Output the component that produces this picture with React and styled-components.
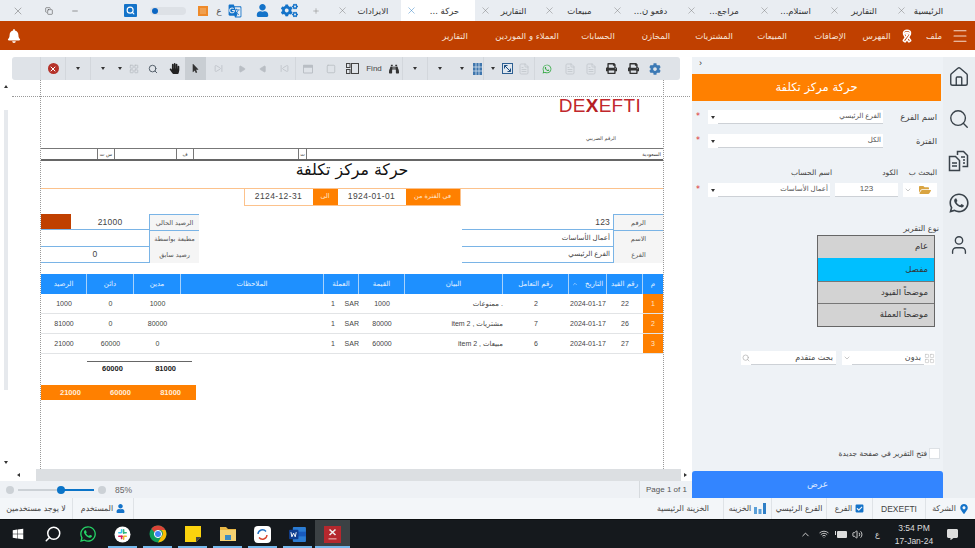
import React from "react";
import styled, { createGlobalStyle } from "styled-components";
import {
  ChevronDown, ChevronUp, Copy, FileText, Home, LayoutGrid, Menu, Minus,
  Play, Plus, Ribbon, Search, SkipBack, SkipForward, Square, User, Volume2, Wifi, X,
} from "lucide-react";
import {
  FaBell, FaBinoculars, FaCheckSquare, FaCog, FaCogs, FaCommentAlt, FaFolderOpen, FaHandPaper, FaMapMarkerAlt,
  FaMousePointer, FaPrint, FaUser, FaWhatsapp, FaWindows, FaRegWindowMaximize,
} from "react-icons/fa";
import { MdGTranslate } from "react-icons/md";

const GlobalStyle = createGlobalStyle`
  html, body { margin: 0; padding: 0; background: #fff; }
  * { box-sizing: border-box; }
  body { font-family: "DejaVu Sans", "Noto Sans", sans-serif; color: #333; overflow: hidden; }
`;

const Page = styled.div`
  width: 975px;
  height: 548px;
  display: flex;
  flex-direction: column;
  overflow: hidden;
`;

/* top tab strip */
const TabStrip = styled.div`
  height: 21px;
  display: flex;
  align-items: stretch;
  background: #e9edf2;
  flex: none;
`;
const WinBtn = styled.div`
  width: ${(p) => p.$w}px;
  margin-left: ${(p) => p.$ml || 0}px;
  display: flex;
  align-items: center;
  justify-content: center;
  color: ${(p) => p.$color || "#666"};
  font-size: 9px;
  flex: none;
`;
const Toggle = styled.div`
  width: 36px;
  height: 8px;
  margin: 7px 0 0 10px;
  border-radius: 4px;
  background: #dde1e6;
  position: relative;
  flex: none;
  &::before {
    content: "";
    position: absolute;
    left: 2px;
    top: 1px;
    width: 6px;
    height: 6px;
    border-radius: 50%;
    background: #0b66c3;
  }
`;
const BlueSquare = styled.div`
  width: 13px;
  height: 13px;
  background: #1473c9;
  border-radius: 1px;
  display: flex;
  align-items: center;
  justify-content: center;
  color: #fff;
`;
const OrangeSquare = styled.div`
  width: 10px;
  height: 10px;
  background: #f0a050;
  border: 2px solid #ee8a2a;
`;
const Tab = styled.div`
  width: ${(p) => p.$w}px;
  display: flex;
  align-items: center;
  background: ${(p) => (p.$active ? "#ffffff" : "transparent")};
  flex: none;
  color: ${(p) => (p.$active ? "#2b7fc4" : "#777")};
`;
const TabClose = styled.div`
  width: 20px;
  display: flex;
  justify-content: center;
  flex: none;
`;
const TabLabel = styled.div`
  flex: 1;
  text-align: center;
  padding-right: ${(p) => p.$pr || 7}px;
  font-size: 8.5px;
  color: #333;
  direction: rtl;
  white-space: nowrap;
`;

/* orange menu */
const MenuBar = styled.div`
  height: 29px;
  flex: none;
  background: #c04000;
  display: flex;
  align-items: center;
  justify-content: space-between;
  padding: 0 6px 0 7px;
  color: #fff;
`;
const MenuItems = styled.div`
  display: flex;
  align-items: center;
`;
const MenuItem = styled.div`
  width: ${(p) => p.$w}px;
  display: flex;
  align-items: center;
  justify-content: center;
  gap: 9px;
  font-size: 8.5px;
  color: #f8e4d8;
  direction: rtl;
  white-space: nowrap;
`;

/* body */
const Body = styled.div`
  height: 448px;
  flex: none;
  display: flex;
`;
const ReportCol = styled.div`
  width: 692px;
  flex: none;
  display: flex;
  flex-direction: column;
  padding-top: 7px;
`;
const Toolbar = styled.div`
  height: 23px;
  width: 668px;
  margin-left: 12px;
  background: #dfe3e8;
  border-radius: 3px;
  display: flex;
  align-items: center;
  padding-left: 28px;
  flex: none;
`;
const Tool = styled.div`
  width: ${(p) => p.$w || 21}px;
  height: 100%;
  display: flex;
  align-items: center;
  justify-content: center;
  flex: none;
  background: ${(p) => (p.$on ? "#c9ced3" : "transparent")};
  border-left: ${(p) => (p.$sep ? "1px solid #d3d7dc" : "0")};
  color: ${(p) => p.$color || "#b9bec4"};
  font-size: 8px;
  font-family: "Liberation Sans", sans-serif;
`;
const Caret = styled.span`
  width: 0;
  height: 0;
  border-left: 2.5px solid transparent;
  border-right: 2.5px solid transparent;
  border-top: 3px solid #333;
`;
const StopDot = styled.div`
  width: 11px;
  height: 11px;
  border-radius: 50%;
  background: #b5322a;
  color: #fff;
  display: flex;
  align-items: center;
  justify-content: center;
`;
const Viewer = styled.div`
  height: 389px;
  flex: none;
  display: flex;
  position: relative;
`;
const VScroll = styled.div`
  width: 40px;
  flex: none;
  position: relative;
`;
const VTrack = styled.div`
  position: absolute;
  left: 4px;
  top: 30px;
  width: 4px;
  height: 280px;
  background: #e6e9ed;
`;
const Arrow = styled.span`
  position: absolute;
  width: 0;
  height: 0;
  left: ${(p) => p.$x}px;
  top: ${(p) => p.$y}px;
  border-left: 2.5px solid transparent;
  border-right: 2.5px solid transparent;
  ${(p) => (p.$down ? "border-top: 3px solid #333;" : "border-bottom: 3px solid #333;")}
`;
const SideArrow = styled.span`
  width: 0;
  height: 0;
  border-top: 2.5px solid transparent;
  border-bottom: 2.5px solid transparent;
  ${(p) => (p.$right ? "border-left: 3px solid #333;" : "border-right: 3px solid #333;")}
`;
const GuideLine = styled.div`
  position: absolute;
  left: 12px;
  right: 2px;
  top: 16px;
  border-top: 1px dotted #999;
`;
const Sheet = styled.div`
  width: 624px;
  flex: none;
  border-left: 1px dotted #999;
  border-right: 1px dotted #999;
  display: flex;
  flex-direction: column;
  padding-top: 19px;
  font-family: "Liberation Sans", "DejaVu Sans", sans-serif;
`;
const Logo = styled.div`
  height: 14px;
  align-self: flex-end;
  margin-right: 22px;
  font-family: "Liberation Sans", sans-serif;
  font-size: 19px;
  line-height: 14px;
  color: #c1272d;
  letter-spacing: 0.3px;
`;
const LogoMark = styled.span`
  font-weight: 700;
  color: #b51f25;
`;
const TaxNo = styled.div`
  margin: 21px 0 0 0;
  height: 8px;
  padding-right: 47px;
  text-align: right;
  direction: rtl;
  font-size: 5px;
  line-height: 8px;
  color: #444;
  font-family: "DejaVu Sans", sans-serif;
`;
const IdTable = styled.div`
  margin-top: 6px;
  height: 13px;
  border-top: 1px solid #777;
  border-bottom: 2px solid #666;
  display: grid;
  grid-template-columns: 56px 18px 61px 18px 104px 9px 1fr;
  font-family: "DejaVu Sans", sans-serif;
  font-size: 5px;
  line-height: 10px;
  color: #333;
`;
const IdCell = styled.div`
  text-align: ${(p) => (p.$right ? "right" : "center")};
  padding-right: ${(p) => (p.$right ? "2px" : "0")};
  border-left: ${(p) => (p.$ruled ? "1px solid #777" : "0")};
  border-right: ${(p) => (p.$ruled ? "1px solid #777" : "0")};
  direction: rtl;
`;
const Title = styled.div`
  height: 27px;
  text-align: center;
  direction: rtl;
  font-family: "DejaVu Sans", sans-serif;
  font-size: 15.8px;
  line-height: 17px;
  color: #111;
`;
const DateBand = styled.div`
  border-top: 1px solid #fcc28c;
  display: flex;
  justify-content: center;
`;
const DateBox = styled.div`
  height: 17px;
  display: flex;
  border: 1px solid #fcc28c;
  border-top: 0;
`;
const DateCell = styled.div`
  width: ${(p) => p.$w}px;
  background: ${(p) => (p.$fill ? "#ff8000" : "#fff")};
  color: ${(p) => (p.$fill ? "#ffe6cc" : "#444")};
  font-family: ${(p) => (p.$fill ? '"DejaVu Sans", sans-serif' : '"Liberation Sans", sans-serif')};
  font-size: ${(p) => (p.$fill ? "6.5px" : "8.5px")};
  text-align: center;
  line-height: 15px;
  direction: rtl;
  letter-spacing: ${(p) => (p.$fill ? "0" : "0.4px")};
`;
const InfoBlocks = styled.div`
  margin-top: 8px;
  height: 49px;
  display: flex;
  justify-content: space-between;
`;
const Info = styled.div`
  width: ${(p) => p.$w}px;
  display: flex;
  flex-direction: column;
`;
const InfoRow = styled.div`
  flex: 1;
  display: flex;
`;
const InfoValue = styled.div`
  flex: 1;
  display: flex;
  align-items: center;
  justify-content: ${(p) => (p.$right ? "flex-start" : "center")};
  border-bottom: 1px solid #7ab4e6;
  padding-right: ${(p) => (p.$right ? "3px" : "0")};
  font-size: ${(p) => (p.$small ? "7px" : "8.5px")};
  color: #444;
  direction: ${(p) => (p.$right ? "rtl" : "ltr")};
  letter-spacing: 0.2px;
  white-space: nowrap;
  font-family: "Liberation Sans", "DejaVu Sans", sans-serif;
`;
const InfoSwatch = styled.div`
  width: 30px;
  height: 100%;
  background: #c04000;
  flex: none;
`;
const InfoNumber = styled.span`
  flex: 1;
  text-align: center;
`;
const InfoLabel = styled.div`
  width: 50px;
  flex: none;
  background: #f5f5f5;
  border-left: 1px solid #7ab4e6;
  border-top: ${(p) => (p.$noTop ? "0" : "1px solid #7ab4e6")};
  display: flex;
  align-items: center;
  justify-content: center;
  direction: rtl;
  font-family: "DejaVu Sans", sans-serif;
  font-size: 6.5px;
  color: #555;
  white-space: nowrap;
`;
const GRID = "46px 47px 47px 143px 35px 46px 98px 66px 38px 36px 1fr";
const TableHead = styled.div`
  margin-top: 11px;
  height: 20px;
  display: grid;
  grid-template-columns: ${GRID};
  background: #1e90ff;
`;
const HeadCell = styled.div`
  border-right: 1px solid #a8d2fb;
  &:last-child { border-right: 0; }
  display: flex;
  align-items: center;
  justify-content: center;
  gap: 7px;
  color: #e6f3ff;
  direction: rtl;
  font-family: "DejaVu Sans", sans-serif;
  font-size: 7px;
  white-space: nowrap;
`;
const TableRow = styled.div`
  height: 20px;
  display: grid;
  grid-template-columns: ${GRID};
  border-bottom: 1px solid #e2e4e6;
`;
const Cell = styled.div`
  display: flex;
  align-items: center;
  justify-content: ${(p) => (p.$right ? "flex-start" : p.$between ? "space-between" : "center")};
  padding: ${(p) => (p.$between ? "0 0 0 7px" : 0)};
  font-size: 7px;
  color: #444;
  direction: ${(p) => (p.$right ? "rtl" : "ltr")};
  font-family: "Liberation Sans", "DejaVu Sans", sans-serif;
  white-space: nowrap;
`;
const NumCell = styled(Cell)`
  background: #ff8000;
  color: #ffe6cc;
`;
const Totals = styled.div`
  width: 105px;
  margin: 7px 0 0 46px;
  border-top: 1px solid #666;
  height: 15px;
  display: flex;
  padding: 2px 16px 0 15px;
  justify-content: space-between;
  font-size: 7.5px;
  font-weight: 700;
  color: #222;
`;
const TotalBar = styled.div`
  width: 155px;
  height: 15px;
  margin-top: 9px;
  background: #ff8000;
  display: flex;
  align-items: center;
  justify-content: space-between;
  padding: 0 15px 0 19px;
  font-size: 7.5px;
  font-weight: 700;
  color: #ffeedd;
`;
const HScrollRow = styled.div`
  height: 12px;
  flex: none;
  display: flex;
  align-items: center;
`;
const HArrowBox = styled.div`
  width: ${(p) => p.$w}px;
  display: flex;
  justify-content: center;
  flex: none;
`;
const HTrack = styled.div`
  width: 645px;
  height: 12px;
  background: #dcdfe2;
  flex: none;
`;
const ZoomBar = styled.div`
  flex: 1;
  display: flex;
  align-items: center;
  background: #eef1f5;
  padding-left: 6px;
`;
const ZoomDot = styled.div`
  width: 8px;
  height: 8px;
  border-radius: 50%;
  background: #ccd1d6;
  flex: none;
`;
const ZoomTrack = styled.div`
  width: 76px;
  height: 2px;
  margin: 0 4px;
  background: linear-gradient(to right, #ccd1d6 0 57%, #0b74c8 57% 100%);
  position: relative;
  flex: none;
  &::after {
    content: "";
    position: absolute;
    left: 39px;
    top: -3px;
    width: 8px;
    height: 8px;
    border-radius: 50%;
    background: #0b74c8;
  }
`;
const ZoomText = styled.div`
  margin-left: 9px;
  font-family: "Liberation Sans", sans-serif;
  font-size: 8.5px;
  color: #666;
`;
const PageCount = styled.div`
  margin-left: auto;
  width: 53px;
  height: 100%;
  border-left: 1px solid #d6dade;
  font-family: "Liberation Sans", sans-serif;
  font-size: 8px;
  color: #555;
  line-height: 17px;
  padding-left: 6px;
  white-space: nowrap;
`;

/* right form panel */
const Panel = styled.div`
  width: 251px;
  flex: none;
  margin-top: 7px;
  background: #eef2f6;
  display: flex;
  flex-direction: column;
  direction: ltr;
`;
const Collapse = styled.div`
  height: 17px;
  padding: 1px 0 0 7px;
  font-size: 9px;
  color: #333;
  font-family: "Liberation Sans", sans-serif;
`;
const PanelTitle = styled.div`
  height: 27px;
  margin-right: 2px;
  background: #ff8000;
  color: #fff;
  text-align: center;
  direction: rtl;
  font-size: 11.5px;
  line-height: 27px;
`;
const FormRow = styled.div`
  height: 14px;
  margin-top: ${(p) => p.$top}px;
  display: flex;
  align-items: center;
  padding-left: 4px;
`;
const Star = styled.div`
  width: 12px;
  flex: none;
  color: #d33;
  font-size: 8px;
  line-height: 14px;
`;
const Field = styled.div`
  width: ${(p) => p.$w || 175}px;
  height: 14px;
  flex: none;
  background: #fff;
  display: flex;
  align-items: center;
  margin-right: ${(p) => p.$mr || 0}px;
`;
const FieldCaret = styled.div`
  width: 10px;
  flex: none;
  display: flex;
  justify-content: center;
`;
const FolderSlot = styled.div`
  flex: 1;
  display: flex;
  justify-content: center;
  color: #d9a441;
`;
const FieldText = styled.div`
  flex: 1;
  height: 14px;
  border-bottom: 1px solid #cdd1d6;
  direction: rtl;
  text-align: ${(p) => (p.$center ? "center" : "right")};
  padding: 0 2px;
  font-size: ${(p) => (p.$center ? "8px" : "7px")};
  line-height: 12px;
  color: #555;
  white-space: nowrap;
  font-family: "Liberation Sans", "DejaVu Sans", sans-serif;
`;
const FormLabel = styled.div`
  flex: 1;
  padding-right: 6px;
  text-align: right;
  direction: rtl;
  font-size: 8.5px;
  color: #444;
  white-space: nowrap;
`;
const ColLabels = styled.div`
  height: 10px;
  margin: 20px 6px 5px 0;
  display: flex;
  justify-content: flex-end;
  font-size: 7.5px;
  color: #444;
`;
const ColLabel = styled.div`
  width: ${(p) => p.$w}px;
  flex: none;
  text-align: right;
  direction: rtl;
  white-space: nowrap;
`;
const TypeLabel = styled.div`
  margin: 26px 4px 1px 0;
  height: 11px;
  direction: rtl;
  font-size: 8px;
  line-height: 11px;
  color: #444;
`;
const TypeList = styled.div`
  width: 118px;
  height: 92px;
  margin-left: 125px;
  border: 1px solid #666;
  display: flex;
  flex-direction: column;
`;
const TypeItem = styled.div`
  flex: 1;
  background: ${(p) => (p.$on ? "#00bfff" : "#d3d3d3")};
  border-top: 1px solid ${(p) => (p.$on ? "#00bfff" : "#777")};
  &:first-child { border-top: 0; }
  direction: rtl;
  padding-right: 6px;
  font-size: 8.5px;
  line-height: 21px;
  color: #333;
`;
const SearchRow = styled.div`
  height: 14px;
  margin: 24px 0 0 49px;
  display: flex;
  gap: 6px;
`;
const SearchField = styled.div`
  width: ${(p) => p.$w}px;
  height: 14px;
  background: #fff;
  display: flex;
  align-items: center;
  color: #aaa;
  flex: none;
`;
const SearchText = styled.div`
  flex: 1;
  height: 14px;
  border-bottom: 1px solid #cdd1d6;
  direction: rtl;
  font-size: 8px;
  line-height: 13px;
  padding-right: 3px;
  color: #444;
`;
const NewPageRow = styled.div`
  margin-top: auto;
  height: 11px;
  display: flex;
  justify-content: flex-end;
  align-items: center;
  gap: 2px;
  padding-right: 3px;
  font-size: 7.5px;
  color: #444;
`;
const NewPageText = styled.span`
  direction: rtl;
`;
const CheckBox = styled.div`
  width: 11px;
  height: 11px;
  background: #fff;
  border: 1px solid #dde1e5;
`;
const ShowButton = styled.div`
  margin-top: 12px;
  height: 27px;
  background: #3385ff;
  border-radius: 3px 3px 0 0;
  color: #dbe9ff;
  text-align: center;
  font-size: 9px;
  line-height: 26px;
  direction: rtl;
`;
const Rail = styled.div`
  flex: 1;
  background: #eaeef2;
  margin-top: 7px;
  display: flex;
  flex-direction: column;
  align-items: center;
  padding-top: 9px;
  gap: 20px;
  color: #39424a;
`;

/* status strip */
const StatusBar = styled.div`
  height: 21px;
  flex: none;
  background: #f3f6f9;
  display: flex;
  justify-content: space-between;
`;
const StatusGroup = styled.div`
  display: flex;
`;
const StatusItem = styled.div`
  width: ${(p) => p.$w}px;
  display: flex;
  align-items: center;
  justify-content: center;
  gap: 3px;
  border-left: ${(p) => (p.$sep ? "1px solid #dfe3e7" : "0")};
  font-size: 7.8px;
  color: #444;
  direction: rtl;
  white-space: nowrap;
  font-family: "DejaVu Sans", sans-serif;
`;
const CompanyName = styled(StatusItem)`
  direction: ltr;
  font-family: "Liberation Sans", sans-serif;
  font-size: 8.5px;
`;

/* windows taskbar */
const Taskbar = styled.div`
  flex: 1;
  background: #15191d;
  display: flex;
  align-items: stretch;
  justify-content: space-between;
  border-top: 1px solid #0c0f11;
`;
const TaskGroup = styled.div`
  display: flex;
`;
const TaskBtn = styled.div`
  width: 35px;
  display: flex;
  align-items: center;
  justify-content: center;
  position: relative;
  color: ${(p) => p.$color || "#fff"};
  background: ${(p) => (p.$active ? "#3c4144" : "transparent")};
  ${(p) =>
    p.$open &&
    `&::after {
      content: "";
      position: absolute;
      left: ${p.$active ? 0 : 3}px;
      right: ${p.$active ? 0 : 3}px;
      bottom: 0;
      height: 2px;
      background: #76b9ed;
    }`}
`;
const Tray = styled.div`
  display: flex;
  align-items: center;
  color: #ddd;
  padding-right: 14px;
  font-family: "Liberation Sans", sans-serif;
`;
const TraySlot = styled.div`
  width: 17px;
  margin-left: ${(p) => p.$ml || 0}px;
  display: flex;
  justify-content: center;
  font-size: 8px;
`;
const Clock = styled.div`
  width: 56px;
  text-align: center;
  font-size: 8.5px;
  line-height: 13px;
  padding-top: 1px;
`;

const tabs = [
  { w: 69, t: "الايرادات" },
  { w: 74, t: "حركة ...", active: true },
  { w: 64, t: "التقارير" },
  { w: 68, t: "مبيعات" },
  { w: 74, t: "دفعو ن..." },
  { w: 73, t: "مراجع..." },
  { w: 70, t: "استلام..." },
  { w: 67, t: "التقارير" },
  { w: 84, t: "الرئيسية", pr: 29 },
];

const menu = [
  { w: 60, t: "التقارير" },
  { w: 84, t: "العملاء و الموردين" },
  { w: 58, t: "الحسابات" },
  { w: 58, t: "المخازن" },
  { w: 58, t: "المشتريات" },
  { w: 58, t: "المبيعات" },
  { w: 58, t: "الإضافات" },
];

const rows = [
  ["1000", "0", "1000", "1000", "2", "22", ". ممنوعات", "1"],
  ["81000", "0", "80000", "80000", "7", "26", "مشتريات , item 2", "2"],
  ["21000", "60000", "0", "60000", "6", "27", "مبيعات , item 2", "3"],
];

const Doc = ({ c = "#bfc4c9" }) => <FileText size={12} color={c} strokeWidth={1.5} />;

const PanelsIcon = () => (
  <svg width="13" height="11" viewBox="0 0 13 11" fill="none" stroke="#444">
    <rect x=".5" y=".5" width="3.5" height="4" />
    <rect x=".5" y="6.5" width="3.5" height="4" />
    <rect x="5.5" y=".5" width="7" height="10" />
  </svg>
);

const ColumnsIcon = () => (
  <svg width="9" height="12" viewBox="0 0 9 12">
    <rect width="9" height="12" fill="#3f76ad" />
    <path d="M3 0v12M6 0v12M0 4h9M0 8h9" stroke="#d6e3ef" strokeWidth=".8" />
  </svg>
);

const ResizeIcon = () => (
  <svg width="11" height="11" viewBox="0 0 11 11">
    <rect x=".5" y=".5" width="10" height="10" fill="#dfe7ef" stroke="#2d5f92" />
    <path d="M2.5 2.5l6 6M2.5 2.5v3M2.5 2.5h3M8.5 8.5v-3M8.5 8.5h-3" stroke="#1c4d80" fill="none" />
  </svg>
);

const DocsIcon = () => (
  <svg width="22" height="22" viewBox="0 0 22 22" fill="none" stroke="#39424a" strokeWidth="1.5">
    <path d="M1.5 6.5h6l4 4v10h-10z" />
    <path d="M9.5 5V1.5h6l4 4v11h-5" />
    <path d="M4 13h5M4 16h5M13 7h4M15 10h2M15 13h2" />
  </svg>
);

const BarsIcon = () => (
  <svg width="12" height="11" viewBox="0 0 12 11">
    <rect x="0" y="4" width="3" height="7" fill="#5a9fd8" />
    <rect x="4.5" y="6" width="3" height="5" fill="#5a9fd8" />
    <rect x="9" y="0" width="3" height="11" fill="#2f7fc6" />
  </svg>
);

const BatteryIcon = () => (
  <svg width="12" height="9" viewBox="0 0 12 9">
    <rect x="2" y="1" width="10" height="7" rx="1" fill="#ddd" />
    <rect x="0" y="1" width="1" height="4" fill="#ddd" />
  </svg>
);

const TaskIcon = ({ kind }) => {
  if (kind === "slack")
    return (
      <svg width="17" height="17" viewBox="0 0 17 17">
        <circle cx="8.5" cy="8.5" r="8" fill="#fff" />
        <rect x="4" y="6" width="4" height="1.6" rx=".8" fill="#36c5f0" />
        <rect x="6.8" y="3" width="1.6" height="4" rx=".8" fill="#36c5f0" />
        <rect x="9" y="9.4" width="4" height="1.6" rx=".8" fill="#ecb22e" />
        <rect x="8.8" y="10" width="1.6" height="4" rx=".8" fill="#ecb22e" />
        <rect x="8.8" y="3" width="1.6" height="5" rx=".8" fill="#2eb67d" />
        <rect x="9" y="6" width="4" height="1.6" rx=".8" fill="#2eb67d" />
        <rect x="4" y="9.4" width="5" height="1.6" rx=".8" fill="#e01e5a" />
        <rect x="6.8" y="9.4" width="1.6" height="4" rx=".8" fill="#e01e5a" />
      </svg>
    );
  if (kind === "chrome")
    return (
      <svg width="18" height="18" viewBox="0 0 18 18">
        <circle cx="9" cy="9" r="8.5" fill="#0f9d58" />
        <path d="M9 .5A8.5 8.5 0 0 1 16.4 5H9a4 4 0 0 0-3.6 2.3L2.4 3.7A8.5 8.5 0 0 1 9 .5z" fill="#db4437" />
        <path d="M16.4 5A8.5 8.5 0 0 1 9 17.5l3.4-6A4 4 0 0 0 12 5z" fill="#fbbc05" />
        <circle cx="9" cy="9" r="3.6" fill="#4285f4" stroke="#fff" strokeWidth="1" />
      </svg>
    );
  if (kind === "sticky")
    return (
      <svg width="16" height="16" viewBox="0 0 16 16">
        <path d="M0 0h16v11l-5 5H0z" fill="#fbd30e" />
        <path d="M11 16v-5h5z" fill="#444" />
      </svg>
    );
  if (kind === "folder")
    return (
      <svg width="16" height="14" viewBox="0 0 16 14">
        <path d="M0 0h6l2 2h8v12H0z" fill="#e9b846" />
        <rect x="0" y="3" width="16" height="11" fill="#f5d272" />
        <rect x="5" y="8" width="6" height="5" fill="#3c8bc4" />
      </svg>
    );
  if (kind === "sync")
    return (
      <svg width="17" height="17" viewBox="0 0 17 17">
        <rect width="17" height="17" rx="4" fill="#fff" />
        <path d="M4 8a4.5 4.5 0 0 1 8-2.5" fill="none" stroke="#1f6fc0" strokeWidth="1.4" />
        <path d="M13 9a4.5 4.5 0 0 1-8 2.5" fill="none" stroke="#d8452f" strokeWidth="1.4" />
      </svg>
    );
  if (kind === "word")
    return (
      <svg width="17" height="15" viewBox="0 0 18 16">
        <rect x="4" y="0" width="14" height="16" rx="1" fill="#2b7cd3" />
        <rect x="4" y="5" width="14" height="5" fill="#185abd" />
        <rect x="0" y="3" width="10" height="10" rx="1" fill="#103f91" />
        <path d="M2 5.5l1 5 1.8-4 1.8 4 1-5" fill="none" stroke="#fff" strokeWidth="1" />
      </svg>
    );
  return (
    <svg width="17" height="17" viewBox="0 0 17 17">
      <rect width="17" height="17" fill="#b5282e" />
      <path d="M5.5 3.5l6 5.5M11.5 3.5l-6 5.5" stroke="#eee" strokeWidth="1.6" />
      <rect x="4.5" y="12" width="8" height="1.6" fill="#d88" />
    </svg>
  );
};

const App = () => {
  return (
    <Page>
      <GlobalStyle />
      <TabStrip>
        <WinBtn $w={36}><X size={12} strokeWidth={1} /></WinBtn>
        <WinBtn $w={26}><Copy size={8} strokeWidth={1.6} color="#444" /></WinBtn>
        <WinBtn $w={26}><Minus size={8} strokeWidth={1.6} color="#444" /></WinBtn>
        <WinBtn $w={20} $ml={32}><BlueSquare><Search size={9} strokeWidth={3} /></BlueSquare></WinBtn>
        <Toggle />
        <WinBtn $w={18} $ml={8}><OrangeSquare /></WinBtn>
        <WinBtn $w={14} $color="#555">ع</WinBtn>
        <WinBtn $w={18} $color="#1473c9"><MdGTranslate size={14} /></WinBtn>
        <WinBtn $w={18} $ml={9} $color="#1473c9"><FaUser size={13} /></WinBtn>
        <WinBtn $w={18} $ml={9} $color="#1473c9"><FaCogs size={17} /></WinBtn>
        <WinBtn $w={18} $ml={9}><Plus size={8} color="#999" /></WinBtn>
        <WinBtn $w={7} />
        {tabs.map((tab) => (
          <Tab key={tab.t + tab.w} $w={tab.w} $active={tab.active}>
            <TabClose><X size={11} strokeWidth={1} /></TabClose>
            <TabLabel $pr={tab.pr}>{tab.t}</TabLabel>
          </Tab>
        ))}
      </TabStrip>

      <MenuBar>
        <FaBell size={14} color="#fff" />
        <MenuItems>
          {menu.map((m) => (
            <MenuItem key={m.t} $w={m.w}>{m.t}</MenuItem>
          ))}
          <MenuItem $w={58}>
            <Ribbon size={14} color="#fff" strokeWidth={2.6} />
            <span>الفهرس</span>
          </MenuItem>
          <MenuItem $w={34}>ملف</MenuItem>
          <MenuItem $w={18}><Menu size={18} color="#f3dcd0" strokeWidth={1.4} /></MenuItem>
        </MenuItems>
      </MenuBar>

      <Body>
        <ReportCol>
          <Toolbar>
            <Tool $w={25} $sep $color="#fff"><StopDot><X size={8} strokeWidth={3} /></StopDot></Tool>
            <Tool $w={25} $sep><Caret /></Tool>
            <Tool $w={24} $sep><Caret /></Tool>
            <Tool $w={12}><Caret /></Tool>
            <Tool $w={16}><LayoutGrid size={10} /></Tool>
            <Tool $w={21} $color="#55606b"><Search size={10} strokeWidth={2.4} /></Tool>
            <Tool $w={22} $color="#222"><FaHandPaper size={11} /></Tool>
            <Tool $on $color="#333"><FaMousePointer size={9} /></Tool>
            <Tool $w={25}><SkipForward size={9} /></Tool>
            <Tool $w={22}><Play size={8} fill="#b9bec4" /></Tool>
            <Tool $w={20}><Play size={8} fill="#b9bec4" style={{ transform: "scaleX(-1)" }} /></Tool>
            <Tool $w={22}><SkipBack size={9} /></Tool>
            <Tool $w={25} $sep><FaRegWindowMaximize size={10} /></Tool>
            <Tool $w={21}><Square size={10} /></Tool>
            <Tool $w={22}><PanelsIcon /></Tool>
            <Tool $w={22} $color="#444">Find</Tool>
            <Tool $w={17} $color="#333"><FaBinoculars size={10} /></Tool>
            <Tool $w={25} $sep><Caret /></Tool>
            <Tool $w={25} $sep><Caret /></Tool>
            <Tool $w={19}><Caret /></Tool>
            <Tool $w={12}><ColumnsIcon /></Tool>
            <Tool $w={19} $sep><Caret /></Tool>
            <Tool $w={11}><ResizeIcon /></Tool>
            <Tool $w={21}><Doc /></Tool>
            <Tool $w={25} $sep $color="#2ca63c"><FaWhatsapp size={10} /></Tool>
            <Tool $w={21}><Doc /></Tool>
            <Tool $w={21}><Doc /></Tool>
            <Tool $w={21} $color="#333"><FaPrint size={11} /></Tool>
            <Tool $w={22} $color="#333"><FaPrint size={11} /></Tool>
            <Tool $w={22} $color="#3d7ab5"><FaCog size={12} /></Tool>
          </Toolbar>
          <Viewer>
            <GuideLine />
            <VScroll>
              <Arrow $x={4} $y={5} />
              <VTrack />
              <Arrow $x={4} $y={381} $down />
            </VScroll>
            <Sheet>
              <Logo>DE<LogoMark>X</LogoMark>EFTI</Logo>
              <TaxNo>الرقم الضريبي</TaxNo>
              <IdTable>
                <IdCell />
                <IdCell $ruled>س ت</IdCell>
                <IdCell />
                <IdCell $ruled>ف</IdCell>
                <IdCell />
                <IdCell $ruled>ت</IdCell>
                <IdCell $right>السعودية</IdCell>
              </IdTable>
              <Title>حركة مركز تكلفة</Title>
              <DateBand>
                <DateBox>
                  <DateCell $w={68}>2124-12-31</DateCell>
                  <DateCell $w={25} $fill>الى</DateCell>
                  <DateCell $w={68}>1924-01-01</DateCell>
                  <DateCell $w={54} $fill>في الفترة من</DateCell>
                </DateBox>
              </DateBand>
              <InfoBlocks>
                <Info $w={158}>
                  <InfoRow>
                    <InfoValue><InfoSwatch /><InfoNumber>21000</InfoNumber></InfoValue>
                    <InfoLabel>الرصيد الحالي</InfoLabel>
                  </InfoRow>
                  <InfoRow>
                    <InfoValue />
                    <InfoLabel>مطبعة بواسطة</InfoLabel>
                  </InfoRow>
                  <InfoRow>
                    <InfoValue>0</InfoValue>
                    <InfoLabel $noTop>رصيد سابق</InfoLabel>
                  </InfoRow>
                </Info>
                <Info $w={201}>
                  <InfoRow>
                    <InfoValue $right>123</InfoValue>
                    <InfoLabel>الرقم</InfoLabel>
                  </InfoRow>
                  <InfoRow>
                    <InfoValue $right $small>أعمال الأساسات</InfoValue>
                    <InfoLabel>الاسم</InfoLabel>
                  </InfoRow>
                  <InfoRow>
                    <InfoValue $right $small>الفرع الرئيسي</InfoValue>
                    <InfoLabel $noTop>الفرع</InfoLabel>
                  </InfoRow>
                </Info>
              </InfoBlocks>
              <TableHead>
                <HeadCell>الرصيد</HeadCell>
                <HeadCell>دائن</HeadCell>
                <HeadCell>مدين</HeadCell>
                <HeadCell>الملاحظات</HeadCell>
                <HeadCell>العملة</HeadCell>
                <HeadCell>القيمة</HeadCell>
                <HeadCell>البيان</HeadCell>
                <HeadCell>رقم التعامل</HeadCell>
                <HeadCell>التاريخ <ChevronUp size={6} /></HeadCell>
                <HeadCell>رقم القيد</HeadCell>
                <HeadCell>م</HeadCell>
              </TableHead>
              {rows.map((r) => (
                <TableRow key={r[7]}>
                  <Cell>{r[0]}</Cell>
                  <Cell>{r[1]}</Cell>
                  <Cell>{r[2]}</Cell>
                  <Cell />
                  <Cell $between><span>1</span><span>SAR</span></Cell>
                  <Cell>{r[3]}</Cell>
                  <Cell $right>{r[6]}</Cell>
                  <Cell>{r[4]}</Cell>
                  <Cell>2024-01-17</Cell>
                  <Cell>{r[5]}</Cell>
                  <NumCell>{r[7]}</NumCell>
                </TableRow>
              ))}
              <Totals><span>60000</span><span>81000</span></Totals>
              <TotalBar><span>21000</span><span>60000</span><span>81000</span></TotalBar>
            </Sheet>
          </Viewer>
          <HScrollRow>
            <HArrowBox $w={36}><SideArrow /></HArrowBox>
            <HTrack />
            <HArrowBox $w={9}><SideArrow $right /></HArrowBox>
          </HScrollRow>
          <ZoomBar>
            <ZoomDot />
            <ZoomTrack />
            <ZoomDot />
            <ZoomText>85%</ZoomText>
            <PageCount>Page 1 of 1</PageCount>
          </ZoomBar>
        </ReportCol>

        <Panel>
          <Collapse>›</Collapse>
          <PanelTitle>حركة مركز تكلفة</PanelTitle>
          <FormRow $top={9}>
            <Star>*</Star>
            <Field>
              <FieldCaret><Caret /></FieldCaret>
              <FieldText>الفرع الرئيسي</FieldText>
            </Field>
            <FormLabel>اسم الفرع</FormLabel>
          </FormRow>
          <FormRow $top={10}>
            <Star>*</Star>
            <Field>
              <FieldCaret><Caret /></FieldCaret>
              <FieldText>الكل</FieldText>
            </Field>
            <FormLabel>الفترة</FormLabel>
          </FormRow>
          <ColLabels>
            <ColLabel $w={80}>اسم الحساب</ColLabel>
            <ColLabel $w={66}>الكود</ColLabel>
            <ColLabel $w={39}>البحث ب</ColLabel>
          </ColLabels>
          <FormRow $top={0}>
            <Star>*</Star>
            <Field $w={122} $mr={5}>
              <FieldCaret><Caret /></FieldCaret>
              <FieldText>أعمال الأساسات</FieldText>
            </Field>
            <Field $w={63} $mr={5}>
              <FieldText $center>123</FieldText>
            </Field>
            <Field $w={34}>
              <FieldCaret><ChevronDown size={8} color="#aaa" /></FieldCaret>
              <FolderSlot><FaFolderOpen size={12} /></FolderSlot>
            </Field>
          </FormRow>
          <TypeLabel>نوع التقرير</TypeLabel>
          <TypeList>
            <TypeItem>عام</TypeItem>
            <TypeItem $on>مفصل</TypeItem>
            <TypeItem>موضحاً القيود</TypeItem>
            <TypeItem>موضحاً العملة</TypeItem>
          </TypeList>
          <SearchRow>
            <SearchField $w={95}>
              <FieldCaret><Search size={8} /></FieldCaret>
              <SearchText>بحث متقدم</SearchText>
            </SearchField>
            <SearchField $w={93}>
              <FieldCaret><ChevronDown size={8} color="#aaa" /></FieldCaret>
              <SearchText>بدون</SearchText>
              <LayoutGrid size={11} strokeWidth={1} />
            </SearchField>
          </SearchRow>
          <NewPageRow>
            <NewPageText>فتح التقرير في صفحة جديدة</NewPageText>
            <CheckBox />
          </NewPageRow>
          <ShowButton>عرض</ShowButton>
        </Panel>

        <Rail>
          <Home size={22} strokeWidth={1.5} />
          <Search size={22} strokeWidth={1.5} />
          <DocsIcon />
          <FaWhatsapp size={22} />
          <User size={22} strokeWidth={1.5} />
        </Rail>
      </Body>

      <StatusBar>
        <StatusGroup>
          <StatusItem $w={72}>لا يوجد مستخدمين</StatusItem>
          <StatusItem $w={61} $sep>
            <FaUser size={9} color="#1473c9" />
            <span>المستخدم</span>
          </StatusItem>
          <StatusItem $w={1} $sep />
        </StatusGroup>
        <StatusGroup>
          <StatusItem $w={80}>الخزينة الرئيسية</StatusItem>
          <StatusItem $w={48} $sep>
            <BarsIcon />
            <span>الخزينه</span>
          </StatusItem>
          <StatusItem $w={55} $sep>الفرع الرئيسي</StatusItem>
          <StatusItem $w={46} $sep>
            <FaCheckSquare size={9} color="#1473c9" />
            <span>الفرع</span>
          </StatusItem>
          <CompanyName $w={53} $sep>DEXEFTI</CompanyName>
          <StatusItem $w={50} $sep>
            <FaMapMarkerAlt size={10} color="#1473c9" />
            <span>الشركة</span>
          </StatusItem>
        </StatusGroup>
      </StatusBar>

      <Taskbar>
        <TaskGroup>
          <TaskBtn><FaWindows size={12} /></TaskBtn>
          <TaskBtn><Search size={18} strokeWidth={2} style={{ transform: "scaleX(-1)" }} /></TaskBtn>
          <TaskBtn $color="#25d366"><FaWhatsapp size={18} /></TaskBtn>
          <TaskBtn $open><TaskIcon kind="slack" /></TaskBtn>
          <TaskBtn $open><TaskIcon kind="chrome" /></TaskBtn>
          <TaskBtn $open><TaskIcon kind="sticky" /></TaskBtn>
          <TaskBtn $open><TaskIcon kind="folder" /></TaskBtn>
          <TaskBtn $open><TaskIcon kind="sync" /></TaskBtn>
          <TaskBtn $open><TaskIcon kind="word" /></TaskBtn>
          <TaskBtn $open $active><TaskIcon kind="app" /></TaskBtn>
        </TaskGroup>
        <Tray>
          <TraySlot><ChevronUp size={11} /></TraySlot>
          <TraySlot $ml={1}><Wifi size={10} /></TraySlot>
          <TraySlot><BatteryIcon /></TraySlot>
          <TraySlot><Volume2 size={11} /></TraySlot>
          <TraySlot $ml={3}>ع</TraySlot>
          <Clock>3:54 PM<br />17-Jan-24</Clock>
          <TraySlot $ml={2}><FaCommentAlt size={11} /></TraySlot>
        </Tray>
      </Taskbar>
    </Page>
  );
};

export default App;
